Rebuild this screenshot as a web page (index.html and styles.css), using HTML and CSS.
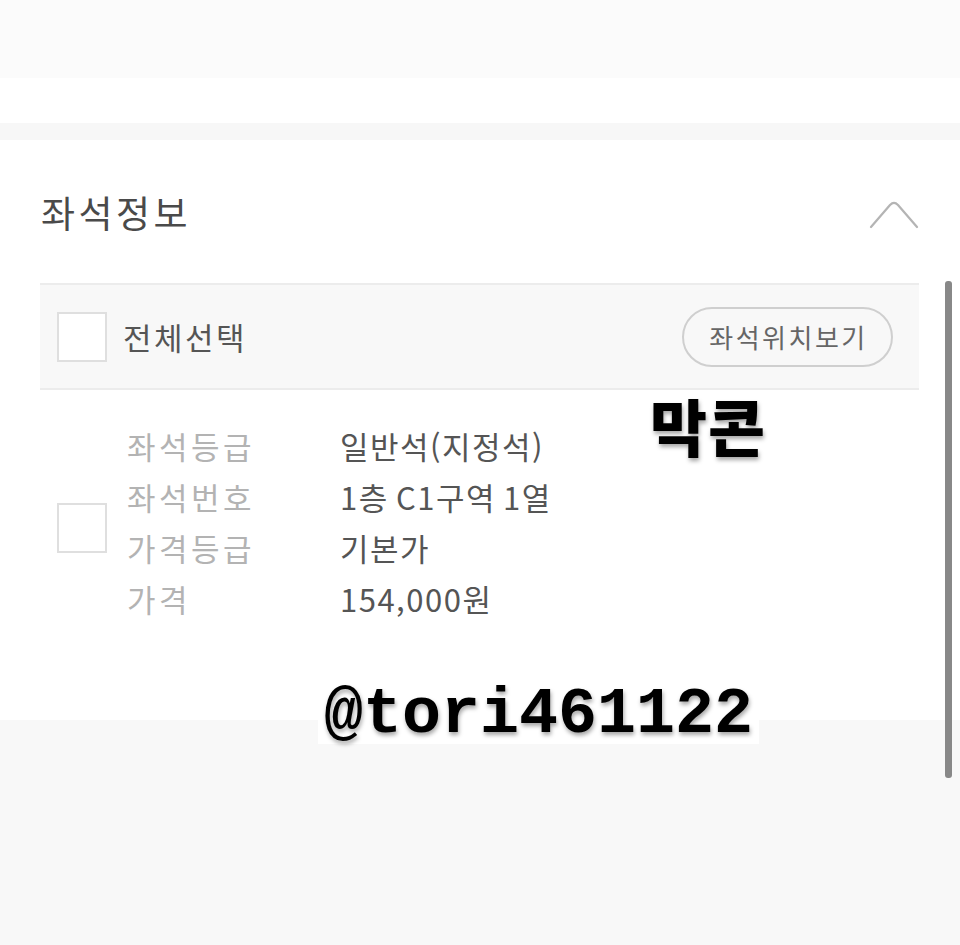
FILE: index.html
```html
<!DOCTYPE html>
<html lang="ko">

<head>
    <meta charset="UTF-8">
    <meta name="viewport" content="width=device-width, initial-scale=1.0">
    <title>좌석정보</title>
    <link rel="stylesheet" href="styles.css">
</head>

<body>
    <div class="page">
        <div class="top-band"></div>
        <div class="top-space"></div>
        <div class="divider"></div>

        <!-- 좌석정보 -->
        <section class="seat-panel">
            <div class="seat-head">
                <h2>좌석정보</h2>
                <svg class="chevron" width="50" height="30" viewBox="0 0 50 30">
                    <path d="M2 27 L21 5 Q25 1 29 5 L48 27" fill="none" stroke="#b4b4b4" stroke-width="2.2" stroke-linecap="round" stroke-linejoin="round"/>
                </svg>
            </div>

            <div class="seat-table">
                <div class="table-head">
                    <span class="check"></span>
                    <span class="select-all">전체선택</span>
                    <button type="button" class="map-btn">좌석위치보기</button>
                </div>

                <div class="seat-row">
                    <span class="check"></span>
                    <dl class="seat-info">
                        <dt>좌석등급</dt><dd>일반석(지정석)</dd>
                        <dt>좌석번호</dt><dd>1층 C1구역 1열</dd>
                        <dt>가격등급</dt><dd>기본가</dd>
                        <dt>가격</dt><dd>154,000원</dd>
                    </dl>
                </div>
            </div>
        </section>

        <div class="bottom-band"></div>

        <!-- 스크롤바 / 스티커 -->
        <div class="scrollbar"></div>
        <div class="sticker tag">막콘</div>
        <div class="sticker handle">@tori461122</div>
    </div>
</body>

</html>
```

FILE: styles.css
```css
body {
    margin: 0;
    background-color: #f9f9f9;
    font-family: "Noto Sans CJK KR", "Noto Sans", sans-serif;
}

.page {
    position: relative;
    width: 960px;
    height: 945px;
    overflow: hidden;
}

.top-band {
    height: 78px;
    background-color: #fbfbfb;
}

.top-space {
    height: 45px;
    background-color: white;
}

.divider {
    height: 17px;
    background-color: #f7f7f7;
}

.seat-panel {
    height: 580px;
    background-color: white;
}

.seat-head {
    display: flex;
    justify-content: space-between;
    align-items: center;
    height: 143px;
    padding: 0 41px 0 41px;
}

.seat-head h2 {
    margin: 0;
    font-size: 37px;
    font-weight: 400;
    color: #4a4a4a;
    letter-spacing: 3.5px;
}

.chevron {
    margin-top: 6px;
}

.seat-table {
    margin: 0 41px 0 40px;
}

.table-head {
    display: flex;
    align-items: center;
    height: 103px;
    padding: 0 26px 0 17px;
    background-color: #f8f8f8;
    border-top: 2px solid #ececec;
    border-bottom: 2px solid #ececec;
}

.check {
    flex: none;
    width: 46px;
    height: 46px;
    background-color: white;
    border: 2px solid #dfdfdf;
}

.select-all {
    margin-left: 16px;
    font-size: 31px;
    color: #555;
    letter-spacing: 2.5px;
}

.map-btn {
    margin-left: auto;
    width: 211px;
    height: 60px;
    padding: 0 0 0 2px;
    background-color: #f8f8f8;
    border: 2px solid #cfcfcf;
    border-radius: 30px;
    font-family: inherit;
    font-size: 26px;
    color: #666;
    letter-spacing: 2.5px;
}

.seat-row {
    display: flex;
    align-items: center;
    padding: 30px 17px;
}

.seat-row .check {
    margin-top: 12px;
}

.seat-info {
    display: grid;
    grid-template-columns: 213px auto;
    margin: 0 0 0 20px;
    font-size: 31px;
    line-height: 51px;
}

.seat-info dt {
    color: #b3b3b3;
    letter-spacing: 3.5px;
}

.seat-info dd {
    margin: 0;
    color: #555;
    letter-spacing: 1.5px;
    word-spacing: -3px;
}

.bottom-band {
    height: 225px;
    background-color: #f8f8f8;
}

.scrollbar {
    position: absolute;
    left: 945px;
    top: 281px;
    width: 7px;
    height: 497px;
    border-radius: 3px;
    background-color: #888;
}

.sticker {
    position: absolute;
    color: black;
    text-shadow: 1px 3px 4px rgba(0, 0, 0, 0.35);
}

.tag {
    left: 650px;
    top: 388px;
    font-size: 62px;
    font-weight: 900;
    line-height: 1.2;
    letter-spacing: 1px;
}

.handle {
    left: 318px;
    top: 686px;
    padding: 0 6px;
    background-color: white;
    font-family: "Liberation Mono", "Courier New", monospace;
    font-size: 65px;
    font-weight: 700;
    line-height: 58px;
}
```
